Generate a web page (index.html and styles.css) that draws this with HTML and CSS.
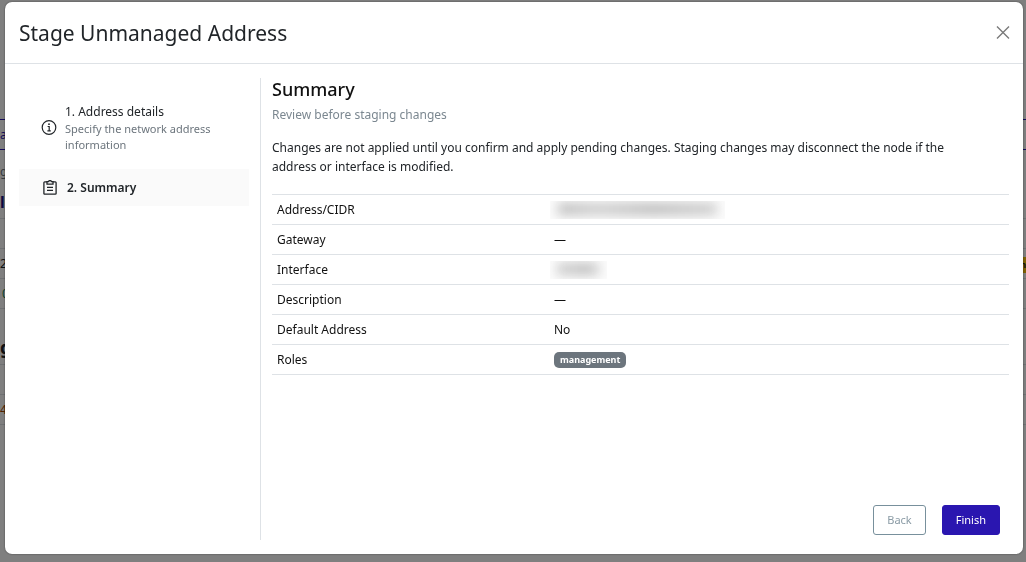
FILE: index.html
```html
<!DOCTYPE html>
<html lang="en">
<head>
    <meta charset="UTF-8">
    <meta name="viewport" content="width=device-width, initial-scale=1.0">
    <title>Stage Unmanaged Address</title>
    <link rel="stylesheet" href="styles.css">
</head>
<body>
    <!-- Page behind the dialog -->
    <div class="page" aria-hidden="true">
        <div class="page-action">ad</div>
        <div class="page-note">g</div>
        <div class="page-title">l</div>
        <div class="page-row"></div>
        <div class="page-row"><span>2/</span><span class="page-badge">n</span></div>
        <div class="page-row page-ok">0</div>
        <div class="page-heading">g</div>
        <div class="page-row"></div>
        <div class="page-row page-warn">4</div>
    </div>

    <div class="backdrop">
        <div class="modal" role="dialog" aria-modal="true" aria-labelledby="modalTitle">
            <header class="modal-header">
                <h1 id="modalTitle">Stage Unmanaged Address</h1>
                <button type="button" class="close" aria-label="Close">
                    <svg width="14" height="14" viewBox="0 0 14 14" fill="none" stroke="currentColor" stroke-width="1.4">
                        <path d="M1 .5l12 12M13 .5L1 12.5"/>
                    </svg>
                </button>
            </header>

            <div class="modal-body">
                <nav class="steps">
                    <a href="#details" class="step">
                        <svg width="16" height="16" viewBox="0 0 16 16" fill="none" stroke="currentColor" stroke-width="1.2">
                            <circle cx="8" cy="7.5" r="6.8"/>
                            <path d="M6.6 6.5h1.6v4.4M6.4 10.9h3.4"/>
                            <circle cx="8" cy="4.2" r="0.9" fill="currentColor" stroke="none"/>
                        </svg>
                        <span class="step-text">
                            <span class="step-name">1. Address details</span>
                            <span class="step-hint">Specify the network address information</span>
                        </span>
                    </a>
                    <a href="#summary" class="step active" aria-current="step">
                        <svg width="16" height="16" viewBox="0 0 16 16" fill="none" stroke="currentColor" stroke-width="1.3">
                            <path d="M5 1.9H2.7a.8.8 0 0 0-.8.8v10.7a.8.8 0 0 0 .8.8h10.6a.8.8 0 0 0 .8-.8V2.7a.8.8 0 0 0-.8-.8H11"/>
                            <path d="M5 1.6h1.6a1.4 1 0 0 1 2.8 0H11v2.5H5z"/>
                            <path d="M5 7.3h6M5 10.3h6"/>
                        </svg>
                        <span class="step-name">2. Summary</span>
                    </a>
                </nav>

                <section class="content" id="summary">
                    <h2>Summary</h2>
                    <p class="subtitle">Review before staging changes</p>
                    <p class="notice">Changes are not applied until you confirm and apply pending changes. Staging changes may disconnect the node if the address or interface is modified.</p>

                    <table class="summary-table">
                        <tbody>
                            <tr><th scope="row">Address/CIDR</th><td><span class="redacted redacted-address"></span></td></tr>
                            <tr><th scope="row">Gateway</th><td>—</td></tr>
                            <tr><th scope="row">Interface</th><td><span class="redacted redacted-interface"></span></td></tr>
                            <tr><th scope="row">Description</th><td>—</td></tr>
                            <tr><th scope="row">Default Address</th><td>No</td></tr>
                            <tr><th scope="row">Roles</th><td><span class="badge">management</span></td></tr>
                        </tbody>
                    </table>

                    <div class="actions">
                        <button type="button" class="button button-outline">Back</button>
                        <button type="button" class="button button-primary">Finish</button>
                    </div>
                </section>
            </div>
        </div>
    </div>
</body>
</html>
```

FILE: styles.css
```css
* {
    margin: 0;
    padding: 0;
    box-sizing: border-box;
}

body {
    font-family: "Noto Sans", "Open Sans", sans-serif;
    font-size: 12px;
    line-height: 19px;
    color: #212529;
    background-color: #fff;
}

/* Page behind the dialog */
.page {
    padding-top: 119px;
    height: 100vh;
    overflow: hidden;
}

.page-action {
    height: 31px;
    padding-top: 5px;
    border-top: 1px solid #2a16b0;
    border-bottom: 1px solid #2a16b0;
    color: #2a16b0;
}

.page-note {
    height: 37px;
    padding-top: 12px;
    color: #6c757d;
}

.page-title {
    height: 32px;
    padding-top: 6px;
    border-bottom: 1px solid #dee2e6;
    font-size: 16px;
    font-weight: 700;
    color: #1c1180;
}

.page-row {
    display: flex;
    justify-content: space-between;
    height: 30px;
    padding-top: 5px;
    border-bottom: 1px solid #dee2e6;
}

.page-badge {
    height: 16px;
    margin-top: 3px;
    background-color: #ffc107;
    font-size: 9px;
    line-height: 16px;
    font-weight: 700;
}

.page-ok {
    padding-left: 2px;
    color: #198754;
}

.page-warn {
    color: #a34700;
}

.page-heading {
    height: 56px;
    padding-top: 29px;
    border-bottom: 1px solid #dee2e6;
    font-size: 18px;
    font-weight: 700;
}

/* Dialog */
.backdrop {
    position: fixed;
    inset: 0;
    display: flex;
    padding: 2px 3px 8px 5px;
    background-color: rgba(0, 0, 0, 0.5);
}

.modal {
    flex: 1;
    display: flex;
    flex-direction: column;
    background-color: #fff;
    border-radius: 7px;
    box-shadow: 0 0 2px rgba(0, 0, 0, 0.5);
}

.modal-header {
    display: flex;
    justify-content: space-between;
    align-items: center;
    padding: 15px 13px 14px 14px;
    border-bottom: 1px solid #dee2e6;
}

.modal-header h1 {
    font-size: 21px;
    line-height: 32px;
    font-weight: 400;
}

.close {
    display: flex;
    border: none;
    background: none;
    color: #7a7a7a;
    cursor: pointer;
}

.modal-body {
    flex: 1;
    display: flex;
    padding: 14px;
}

.steps {
    flex: 0 0 242px;
    padding: 18px 11px 0 0;
    border-right: 1px solid #dee2e6;
}

.step {
    display: flex;
    align-items: center;
    gap: 8px;
    padding: 6px 22px;
    color: #212529;
    text-decoration: none;
}

.step svg {
    flex: none;
}

.step-name {
    display: block;
    line-height: 19px;
}

.step-hint {
    display: block;
    font-size: 11px;
    line-height: 16px;
    color: #6c757d;
}

.step.active {
    gap: 9px;
    margin-top: 10px;
    padding: 9px 23px;
    background-color: #fafafa;
    font-weight: 600;
}

.content {
    flex: 1;
    display: flex;
    flex-direction: column;
    padding-left: 11px;
}

.content h2 {
    font-size: 18px;
    line-height: 23px;
    font-weight: 500;
    color: #111;
}

.subtitle {
    margin: 4px 0 14px;
    color: #7b8790;
}

.notice {
    margin-bottom: 18px;
    padding-right: 32px;
}

.summary-table {
    width: 100%;
    border-collapse: collapse;
    table-layout: fixed;
    border-top: 1px solid #dee2e6;
    color: #111;
}

.summary-table th,
.summary-table td {
    height: 30px;
    padding: 5px;
    border-bottom: 1px solid #dee2e6;
    font-weight: 400;
    line-height: 19px;
    text-align: left;
}

.summary-table th {
    width: 277px;
}

/* Hidden values */
.redacted {
    display: block;
    height: 18px;
    margin: 1px 0 0 -4px;
    overflow: hidden;
    background-color: #fcfcfc;
}

.redacted::before {
    content: "";
    display: block;
    height: 12px;
    margin: 2px 8px;
    background: linear-gradient(to right, #bbb, #ccc 25%, #bbb 60%, #ccc);
    filter: blur(6px);
}

.redacted-address {
    width: 175px;
}

.redacted-interface {
    width: 57px;
}

.badge {
    display: block;
    width: max-content;
    padding: 0 6px;
    border-radius: 5px;
    background-color: #6c757d;
    color: #fff;
    font-size: 9px;
    line-height: 16px;
    font-weight: 700;
}

.actions {
    display: flex;
    justify-content: flex-end;
    gap: 16px;
    margin-top: auto;
    padding: 0 9px 5px 0;
}

.button {
    height: 30px;
    padding: 0 13px 2px;
    border: 1px solid;
    border-radius: 3px;
    font-family: inherit;
    font-size: 11px;
    cursor: pointer;
}

.button-outline {
    border-color: #78909c;
    background-color: #fff;
    color: #8a9ba5;
}

.button-primary {
    border-color: #2a16b0;
    background-color: #2a16b0;
    color: #fff;
}
```
